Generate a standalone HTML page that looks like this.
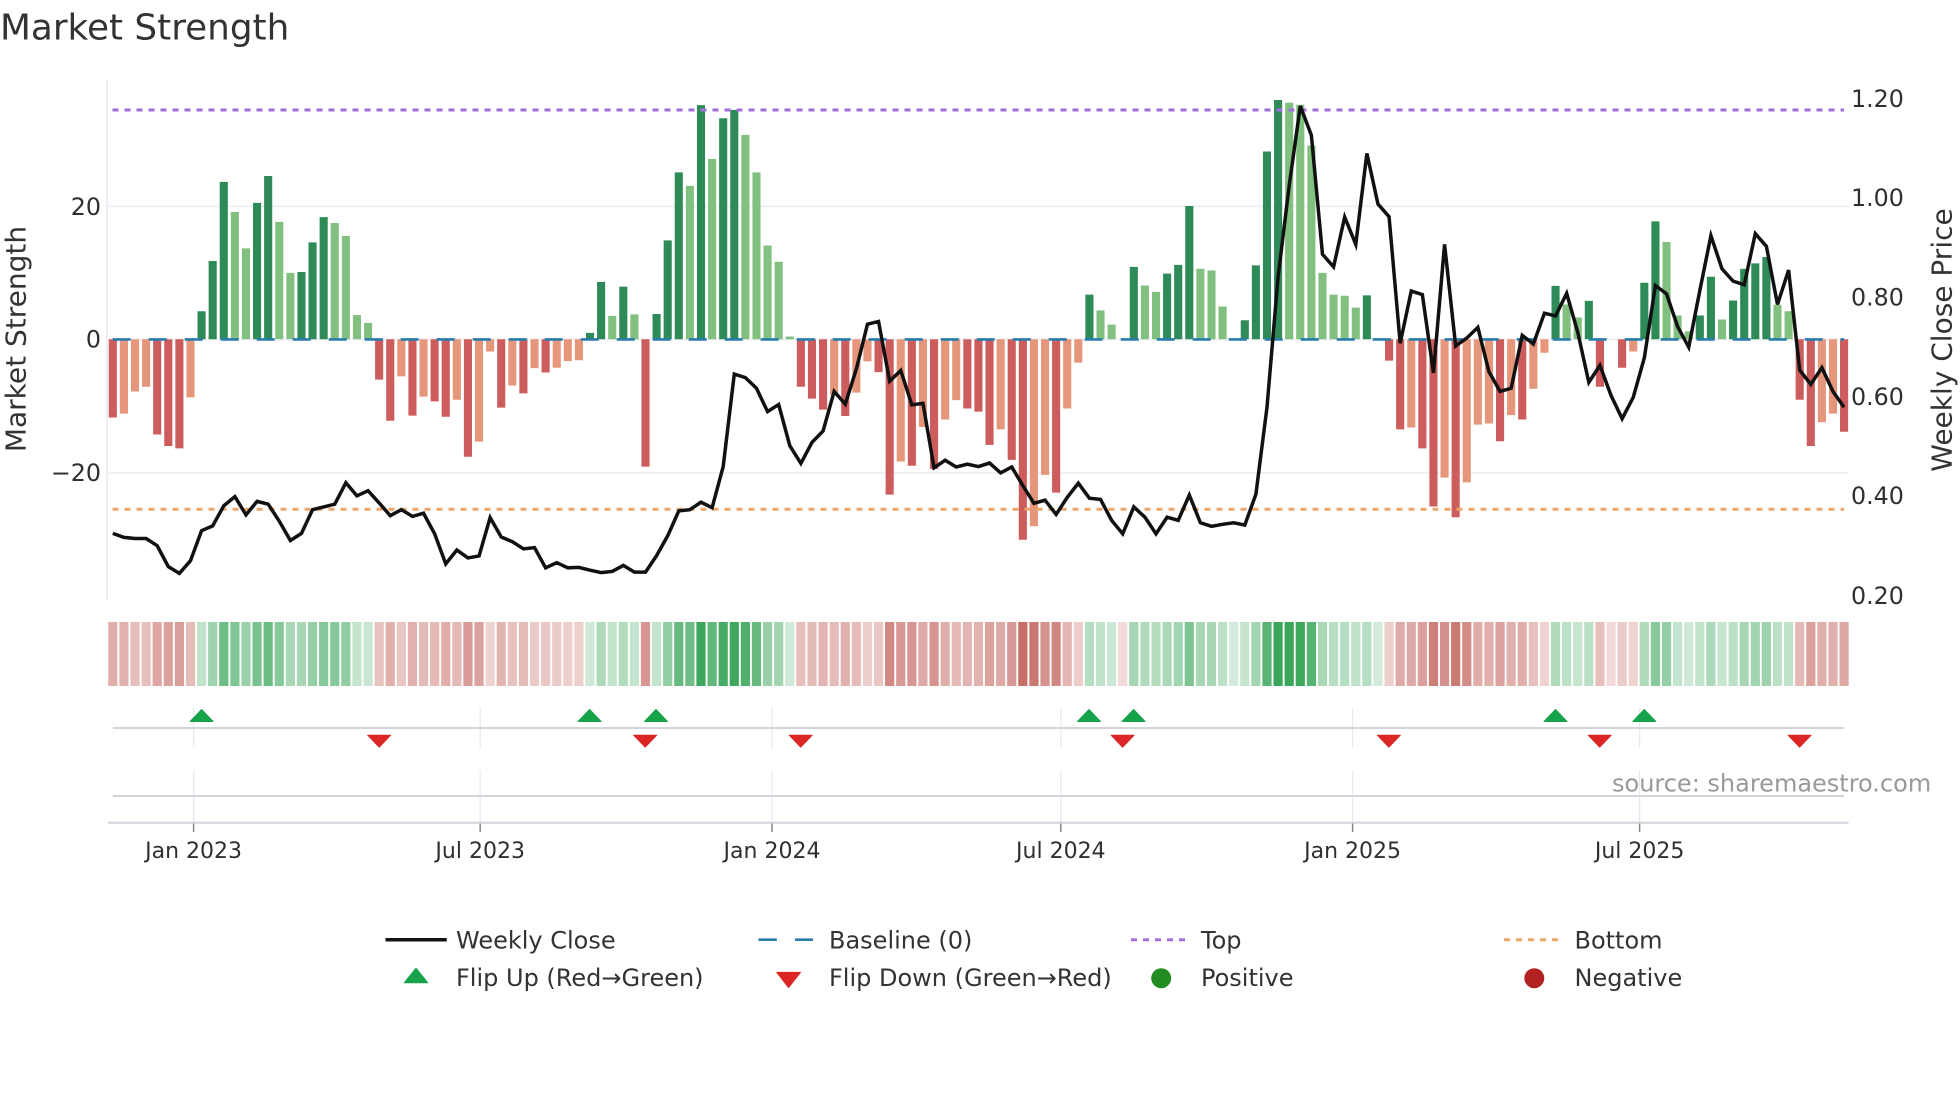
<!DOCTYPE html>
<html lang="en">
<head>
<meta charset="utf-8">
<title>Market Strength</title>
<style>
html,body{margin:0;padding:0;background:#fff;width:1960px;height:1102px;overflow:hidden}
svg{display:block}
text{font-family:"DejaVu Sans","Liberation Sans",sans-serif}
.g{stroke:#229b46}
.r{stroke:#b8463f}
.tk{font-size:23.75px;fill:#2f2f2f}
.xt{font-size:22px;fill:#2f2f2f;text-anchor:middle}
.lg{font-size:24px;fill:#333}
</style>
</head>
<body>
<svg width="1960" height="1102" viewBox="0 0 1960 1102" xmlns="http://www.w3.org/2000/svg">
<rect width="1960" height="1102" fill="#fff"/>

<text x="0" y="39.5" font-size="35.8" fill="#333">Market Strength</text>

<!-- grid -->
<g stroke="#eef0f5" stroke-width="2" fill="none">
<path d="M107 80V600"/>
<path d="M107 206.4H1849"/>
<path d="M107 339.4H1849"/>
<path d="M107 472.9H1849"/>
</g>

<!-- bars -->
<g transform="translate(112.8 0) scale(11.098 .39541)" fill="none" stroke-width=".73">
<path stroke="#cd5c5c" d="M0 858V1056M4 858V1099M5 858V1128M6 858V1134M24 858V960M25 858V1064M27 858V1051M29 858V1015M30 858V1054M32 858V1155M35 858V1031M37 858V995M39 858V942M48 858V1180M62 858V978M63 858V1008M64 858V1036M66 858V1052M69 858V941M70 858V1251M72 858V1178M74 858V1186M77 858V1033M78 858V1041M79 858V1125M81 858V1163M82 858V1365M85 858V1246M115 858V912M116 858V1086M118 858V1134M119 858V1281M121 858V1308M125 858V1116M127 858V1061M134 858V978M136 858V930M152 858V1011M153 858V1128M156 858V1092"/>
<path stroke="#e6967a" d="M1 858V1046M2 858V990M3 858V978M7 858V1005M26 858V952M28 858V1003M31 858V1011M33 858V1117M34 858V889M36 858V975M38 858V931M40 858V930M41 858V913M42 858V911M65 858V1000M67 858V993M68 858V914M71 858V1167M73 858V1080M75 858V1061M76 858V1012M80 858V1086M83 858V1331M84 858V1201M86 858V1033M87 858V917M117 858V1081M120 858V1208M122 858V1220M123 858V1074M124 858V1071M126 858V1050M128 858V983M129 858V892M137 858V889M154 858V1068M155 858V1046"/>
<path stroke="#2e8b57" d="M8 858V787M9 858V660M10 858V460M13 858V513M14 858V445M17 858V688M18 858V613M19 858V549M43 858V842M44 858V713M46 858V725M49 858V794M50 858V608M51 858V436M53 858V266M55 858V299M56 858V278M88 858V745M92 858V675M95 858V692M96 858V670M97 858V521M102 858V810M103 858V671M104 858V383M105 858V253M113 858V747M130 858V723M133 858V761M138 858V715M139 858V560M143 858V798M144 858V700M146 858V760M147 858V680M148 858V666M149 858V650"/>
<path stroke="#81c07f" d="M11 858V536M12 858V628M15 858V561M16 858V690M20 858V564M21 858V597M22 858V797M23 858V817M45 858V799M47 858V795M52 858V470M54 858V402M57 858V341M58 858V436M59 858V621M60 858V662M61 858V851M89 858V785M90 858V821M93 858V722M94 858V738M98 858V680M99 858V684M100 858V775M106 858V260M107 858V265M108 858V368M109 858V690M110 858V745M111 858V748M112 858V778M131 858V770M132 858V803M140 858V612M141 858V798M142 858V838M145 858V808M150 858V771M151 858V787"/>
</g>

<!-- reference lines -->
<g fill="none">
<path d="M112.7 339.4H1844" stroke="#2a7cad" stroke-width="2.6" stroke-dasharray="18 18"/>
<path d="M112.5 110H1844" stroke="#a36fe0" stroke-width="3" stroke-dasharray="6 6"/>
<path d="M112.5 509.3H1844" stroke="#eca769" stroke-width="3" stroke-dasharray="6 6"/>
</g>

<!-- weekly close -->
<g transform="translate(112.8 0) scale(11.098 .39541)" fill="none">
<polyline vector-effect="non-scaling-stroke" stroke="#111" stroke-width="3.5" stroke-linejoin="miter" points="0,1349 1,1359 2,1362 3,1362 4,1380 5,1433 6,1450 7,1418 8,1342 9,1330 10,1279 11,1256 12,1302 13,1268 14,1275 15,1318 16,1367 17,1349 18,1289 19,1282 20,1275 21,1221 22,1254 23,1241 24,1272 25,1304 26,1289 27,1306 28,1298 29,1350 30,1426 31,1391 32,1411 33,1406 34,1309 35,1358 36,1370 37,1388 38,1385 39,1436 40,1423 41,1436 42,1435 43,1442 44,1448 45,1445 46,1430 47,1447 48,1447 49,1405 50,1355 51,1292 52,1289 53,1270 54,1284 55,1180 56,946 57,955 58,982 59,1041 60,1023 61,1127 62,1172 63,1119 64,1090 65,990 66,1022 67,933 68,820 69,813 70,964 71,937 72,1024 73,1020 74,1183 75,1164 76,1181 77,1174 78,1180 79,1171 80,1196 81,1181 82,1228 83,1273 84,1265 85,1301 86,1258 87,1222 88,1260 89,1263 90,1316 91,1350 92,1282 93,1308 94,1350 95,1308 96,1316 97,1252 98,1322 99,1331 100,1326 101,1322 102,1328 103,1250 104,1030 105,700 106,470 107,268 108,342 109,643 110,675 111,549 112,618 113,388 114,516 115,548 116,868 117,736 118,745 119,943 120,618 121,875 122,855 123,828 124,940 125,990 126,982 127,848 128,870 129,792 130,799 131,742 132,840 133,967 134,924 135,1000 136,1059 137,1005 138,905 139,722 140,743 141,826 142,878 143,735 144,596 145,680 146,711 147,720 148,591 149,623 150,770 151,683 152,936 153,972 154,930 155,990 156,1030"/>
</g>

<!-- heat strip -->
<g transform="translate(112.8 0) scale(11.098 1)" fill="none" stroke-width=".83">
<path class="r" stroke-opacity=".43" d="M0 622V686"/><path class="r" stroke-opacity=".42" d="M1 622V686"/><path class="r" stroke-opacity=".35" d="M2 622V686"/><path class="r" stroke-opacity=".34" d="M3 622V686"/><path class="r" stroke-opacity=".48" d="M4 622V686"/><path class="r" stroke-opacity=".51" d="M5 622V686"/><path class="r" stroke-opacity=".52" d="M6 622V686"/><path class="r" stroke-opacity=".37" d="M7 622V686"/>
<path class="g" stroke-opacity=".28" d="M8 622V686"/><path class="g" stroke-opacity=".43" d="M9 622V686"/><path class="g" stroke-opacity=".66" d="M10 622V686"/><path class="g" stroke-opacity=".57" d="M11 622V686"/><path class="g" stroke-opacity=".46" d="M12 622V686"/><path class="g" stroke-opacity=".6" d="M13 622V686"/><path class="g" stroke-opacity=".67" d="M14 622V686"/><path class="g" stroke-opacity=".54" d="M15 622V686"/><path class="g" stroke-opacity=".39" d="M16 622V686"/><path class="g" stroke-opacity=".4" d="M17 622V686"/><path class="g" stroke-opacity=".48" d="M18 622V686"/><path class="g" stroke-opacity=".55" d="M19 622V686"/><path class="g" stroke-opacity=".54" d="M20 622V686"/><path class="g" stroke-opacity=".5" d="M21 622V686"/><path class="g" stroke-opacity=".27" d="M22 622V686"/><path class="g" stroke-opacity=".25" d="M23 622V686"/>
<path class="r" stroke-opacity=".32" d="M24 622V686"/><path class="r" stroke-opacity=".44" d="M25 622V686"/><path class="r" stroke-opacity=".31" d="M26 622V686"/><path class="r" stroke-opacity=".42" d="M27 622V686"/><path class="r" stroke-opacity=".37" d="M28 622V686"/><path class="r" stroke-opacity=".38" d="M29 622V686"/><path class="r" stroke-opacity=".43" d="M30 622V686"/><path class="r" stroke-opacity=".38" d="M31 622V686"/><path class="r" stroke-opacity=".54" d="M32 622V686"/><path class="r" stroke-opacity=".5" d="M33 622V686"/><path class="r" stroke-opacity=".24" d="M34 622V686"/><path class="r" stroke-opacity=".4" d="M35 622V686"/><path class="r" stroke-opacity=".33" d="M36 622V686"/><path class="r" stroke-opacity=".36" d="M37 622V686"/><path class="r" stroke-opacity=".28" d="M38 622V686"/><path class="r" stroke-opacity=".3" d="M39 622V686"/><path class="r" stroke-opacity=".28" d="M40 622V686"/><path class="r" stroke-opacity=".26" d="M41 622V686"/><path class="r" stroke-opacity=".26" d="M42 622V686"/>
<path class="g" stroke-opacity=".22" d="M43 622V686"/><path class="g" stroke-opacity=".37" d="M44 622V686"/><path class="g" stroke-opacity=".27" d="M45 622V686"/><path class="g" stroke-opacity=".35" d="M46 622V686"/><path class="g" stroke-opacity=".27" d="M47 622V686"/>
<path class="r" stroke-opacity=".57" d="M48 622V686"/>
<path class="g" stroke-opacity=".27" d="M49 622V686"/><path class="g" stroke-opacity=".49" d="M50 622V686"/><path class="g" stroke-opacity=".69" d="M51 622V686"/><path class="g" stroke-opacity=".65" d="M52 622V686"/><path class="g" stroke-opacity=".88" d="M53 622V686"/><path class="g" stroke-opacity=".72" d="M54 622V686"/><path class="g" stroke-opacity=".84" d="M55 622V686"/><path class="g" stroke-opacity=".87" d="M56 622V686"/><path class="g" stroke-opacity=".79" d="M57 622V686"/><path class="g" stroke-opacity=".69" d="M58 622V686"/><path class="g" stroke-opacity=".47" d="M59 622V686"/><path class="g" stroke-opacity=".43" d="M60 622V686"/><path class="g" stroke-opacity=".21" d="M61 622V686"/>
<path class="r" stroke-opacity=".34" d="M62 622V686"/><path class="r" stroke-opacity=".37" d="M63 622V686"/><path class="r" stroke-opacity=".4" d="M64 622V686"/><path class="r" stroke-opacity=".36" d="M65 622V686"/><path class="r" stroke-opacity=".42" d="M66 622V686"/><path class="r" stroke-opacity=".36" d="M67 622V686"/><path class="r" stroke-opacity=".26" d="M68 622V686"/><path class="r" stroke-opacity=".3" d="M69 622V686"/><path class="r" stroke-opacity=".65" d="M70 622V686"/><path class="r" stroke-opacity=".55" d="M71 622V686"/><path class="r" stroke-opacity=".57" d="M72 622V686"/><path class="r" stroke-opacity=".46" d="M73 622V686"/><path class="r" stroke-opacity=".58" d="M74 622V686"/><path class="r" stroke-opacity=".43" d="M75 622V686"/><path class="r" stroke-opacity=".38" d="M76 622V686"/><path class="r" stroke-opacity=".4" d="M77 622V686"/><path class="r" stroke-opacity=".41" d="M78 622V686"/><path class="r" stroke-opacity=".51" d="M79 622V686"/><path class="r" stroke-opacity=".46" d="M80 622V686"/><path class="r" stroke-opacity=".55" d="M81 622V686"/><path class="r" stroke-opacity=".78" d="M82 622V686"/><path class="r" stroke-opacity=".74" d="M83 622V686"/><path class="r" stroke-opacity=".59" d="M84 622V686"/><path class="r" stroke-opacity=".65" d="M85 622V686"/><path class="r" stroke-opacity=".4" d="M86 622V686"/><path class="r" stroke-opacity=".27" d="M87 622V686"/>
<path class="g" stroke-opacity=".33" d="M88 622V686"/><path class="g" stroke-opacity=".28" d="M89 622V686"/><path class="g" stroke-opacity=".24" d="M90 622V686"/>
<path class="r" stroke-opacity=".2" d="M91 622V686"/>
<path class="g" stroke-opacity=".41" d="M92 622V686"/><path class="g" stroke-opacity=".36" d="M93 622V686"/><path class="g" stroke-opacity=".34" d="M94 622V686"/><path class="g" stroke-opacity=".39" d="M95 622V686"/><path class="g" stroke-opacity=".42" d="M96 622V686"/><path class="g" stroke-opacity=".59" d="M97 622V686"/><path class="g" stroke-opacity=".4" d="M98 622V686"/><path class="g" stroke-opacity=".4" d="M99 622V686"/><path class="g" stroke-opacity=".3" d="M100 622V686"/><path class="g" stroke-opacity=".2" d="M101 622V686"/><path class="g" stroke-opacity=".26" d="M102 622V686"/><path class="g" stroke-opacity=".42" d="M103 622V686"/><path class="g" stroke-opacity=".75" d="M104 622V686"/><path class="g" stroke-opacity=".9" d="M105 622V686"/><path class="g" stroke-opacity=".89" d="M106 622V686"/><path class="g" stroke-opacity=".88" d="M107 622V686"/><path class="g" stroke-opacity=".76" d="M108 622V686"/><path class="g" stroke-opacity=".39" d="M109 622V686"/><path class="g" stroke-opacity=".33" d="M110 622V686"/><path class="g" stroke-opacity=".33" d="M111 622V686"/><path class="g" stroke-opacity=".29" d="M112 622V686"/><path class="g" stroke-opacity=".33" d="M113 622V686"/><path class="g" stroke-opacity=".2" d="M114 622V686"/>
<path class="r" stroke-opacity=".26" d="M115 622V686"/><path class="r" stroke-opacity=".46" d="M116 622V686"/><path class="r" stroke-opacity=".46" d="M117 622V686"/><path class="r" stroke-opacity=".52" d="M118 622V686"/><path class="r" stroke-opacity=".69" d="M119 622V686"/><path class="r" stroke-opacity=".6" d="M120 622V686"/><path class="r" stroke-opacity=".72" d="M121 622V686"/><path class="r" stroke-opacity=".62" d="M122 622V686"/><path class="r" stroke-opacity=".45" d="M123 622V686"/><path class="r" stroke-opacity=".44" d="M124 622V686"/><path class="r" stroke-opacity=".5" d="M125 622V686"/><path class="r" stroke-opacity=".42" d="M126 622V686"/><path class="r" stroke-opacity=".43" d="M127 622V686"/><path class="r" stroke-opacity=".34" d="M128 622V686"/><path class="r" stroke-opacity=".24" d="M129 622V686"/>
<path class="g" stroke-opacity=".36" d="M130 622V686"/><path class="g" stroke-opacity=".3" d="M131 622V686"/><path class="g" stroke-opacity=".26" d="M132 622V686"/><path class="g" stroke-opacity=".31" d="M133 622V686"/>
<path class="r" stroke-opacity=".34" d="M134 622V686"/><path class="r" stroke-opacity=".2" d="M135 622V686"/><path class="r" stroke-opacity=".28" d="M136 622V686"/><path class="r" stroke-opacity=".24" d="M137 622V686"/>
<path class="g" stroke-opacity=".36" d="M138 622V686"/><path class="g" stroke-opacity=".54" d="M139 622V686"/><path class="g" stroke-opacity=".48" d="M140 622V686"/><path class="g" stroke-opacity=".27" d="M141 622V686"/><path class="g" stroke-opacity=".22" d="M142 622V686"/><path class="g" stroke-opacity=".27" d="M143 622V686"/><path class="g" stroke-opacity=".38" d="M144 622V686"/><path class="g" stroke-opacity=".26" d="M145 622V686"/><path class="g" stroke-opacity=".31" d="M146 622V686"/><path class="g" stroke-opacity=".4" d="M147 622V686"/><path class="g" stroke-opacity=".42" d="M148 622V686"/><path class="g" stroke-opacity=".44" d="M149 622V686"/><path class="g" stroke-opacity=".3" d="M150 622V686"/><path class="g" stroke-opacity=".28" d="M151 622V686"/>
<path class="r" stroke-opacity=".38" d="M152 622V686"/><path class="r" stroke-opacity=".51" d="M153 622V686"/><path class="r" stroke-opacity=".44" d="M154 622V686"/><path class="r" stroke-opacity=".42" d="M155 622V686"/><path class="r" stroke-opacity=".47" d="M156 622V686"/>
</g>

<!-- flip panel -->
<g fill="none">
<path stroke="#e8eaf0" stroke-width="1.25" d="M193.6 708V748M480.2 708V748M772 708V748M1060.8 708V748M1352.6 708V748M1639.6 708V748M193.6 770V822M480.2 770V822M772 770V822M1060.8 770V822M1352.6 770V822M1639.6 770V822"/>
<path stroke="#d1d5db" stroke-width="2" d="M112.8 728H1844M112.8 796H1844M108 822.7H1848.5"/>
<path stroke="#888" stroke-width="1.5" d="M193.6 823.5V832M480.2 823.5V832M772 823.5V832M1060.8 823.5V832M1352.6 823.5V832M1639.6 823.5V832"/>
</g>

<g fill="#16a34a" stroke="#16a34a" stroke-width="1" stroke-linejoin="round">
<path d="M201.6 709.5L213.1 721.5H190.1Z"/>
<path d="M589.6 709.5L601.1 721.5H578.1Z"/>
<path d="M656 709.5L667.5 721.5H644.5Z"/>
<path d="M1089 709.5L1100.5 721.5H1077.5Z"/>
<path d="M1133.6 709.5L1145.1 721.5H1122.1Z"/>
<path d="M1555.5 709.5L1567 721.5H1544Z"/>
<path d="M1644.3 709.5L1655.8 721.5H1632.8Z"/>
</g>
<g fill="#dc2626" stroke="#dc2626" stroke-width="1" stroke-linejoin="round">
<path d="M379.2 747.2L390.7 735.2H367.7Z"/>
<path d="M645.2 747.2L656.7 735.2H633.7Z"/>
<path d="M800.7 747.2L812.2 735.2H789.2Z"/>
<path d="M1122.6 747.2L1134.1 735.2H1111.1Z"/>
<path d="M1388.8 747.2L1400.3 735.2H1377.3Z"/>
<path d="M1599.7 747.2L1611.2 735.2H1588.2Z"/>
<path d="M1799.6 747.2L1811.1 735.2H1788.1Z"/>
</g>

<!-- axis labels -->
<text class="tk" x="101" y="215" text-anchor="end">20</text>
<text class="tk" x="101" y="347.7" text-anchor="end">0</text>
<text class="tk" x="101" y="481.2" text-anchor="end">−20</text>
<text class="tk" x="1851" y="106.8">1.20</text>
<text class="tk" x="1851" y="205.8">1.00</text>
<text class="tk" x="1851" y="305.3">0.80</text>
<text class="tk" x="1851" y="404.8">0.60</text>
<text class="tk" x="1851" y="503.8">0.40</text>
<text class="tk" x="1851" y="603.8">0.20</text>
<text transform="translate(25.5 339) rotate(-90)" font-size="28" fill="#333" text-anchor="middle">Market Strength</text>
<text transform="translate(1951.5 340) rotate(-90)" font-size="28" fill="#333" text-anchor="middle">Weekly Close Price</text>

<text class="xt" x="193.6" y="858">Jan 2023</text>
<text class="xt" x="480.2" y="858">Jul 2023</text>
<text class="xt" x="772" y="858">Jan 2024</text>
<text class="xt" x="1060.8" y="858">Jul 2024</text>
<text class="xt" x="1352.6" y="858">Jan 2025</text>
<text class="xt" x="1639.6" y="858">Jul 2025</text>

<text x="1612" y="791.7" font-size="24" fill="#999">source: sharemaestro.com</text>

<!-- legend -->
<path d="M385.5 939.7H446.7" stroke="#111" stroke-width="3.5" fill="none"/>
<text class="lg" x="456" y="948.3">Weekly Close</text>
<path d="M758.5 939.7H813" stroke="#2a7cad" stroke-width="2.6" stroke-dasharray="18.3 18.2" fill="none"/>
<text class="lg" x="829" y="948.3">Baseline (0)</text>
<path d="M1131 939.7H1187" stroke="#a36fe0" stroke-width="3" stroke-dasharray="6 6" fill="none"/>
<text class="lg" x="1201" y="948.3">Top</text>
<path d="M1504 939.7H1560" stroke="#eca769" stroke-width="3" stroke-dasharray="6 6" fill="none"/>
<text class="lg" x="1574.5" y="948.3">Bottom</text>

<path d="M416 968.2L427.8 982.8H404.2Z" fill="#16a34a" stroke="#16a34a" stroke-width="1" stroke-linejoin="round"/>
<text class="lg" x="456" y="986">Flip Up (Red→Green)</text>
<path d="M788.6 987.6L800.4 972.4H776.8Z" fill="#dc2626" stroke="#dc2626" stroke-width="1" stroke-linejoin="round"/>
<text class="lg" x="829" y="986">Flip Down (Green→Red)</text>
<circle cx="1161.2" cy="978.2" r="10" fill="#228b22"/>
<text class="lg" x="1201" y="986">Positive</text>
<circle cx="1534.3" cy="978.2" r="10" fill="#b22222"/>
<text class="lg" x="1574.5" y="986">Negative</text>
</svg>
</body>
</html>
